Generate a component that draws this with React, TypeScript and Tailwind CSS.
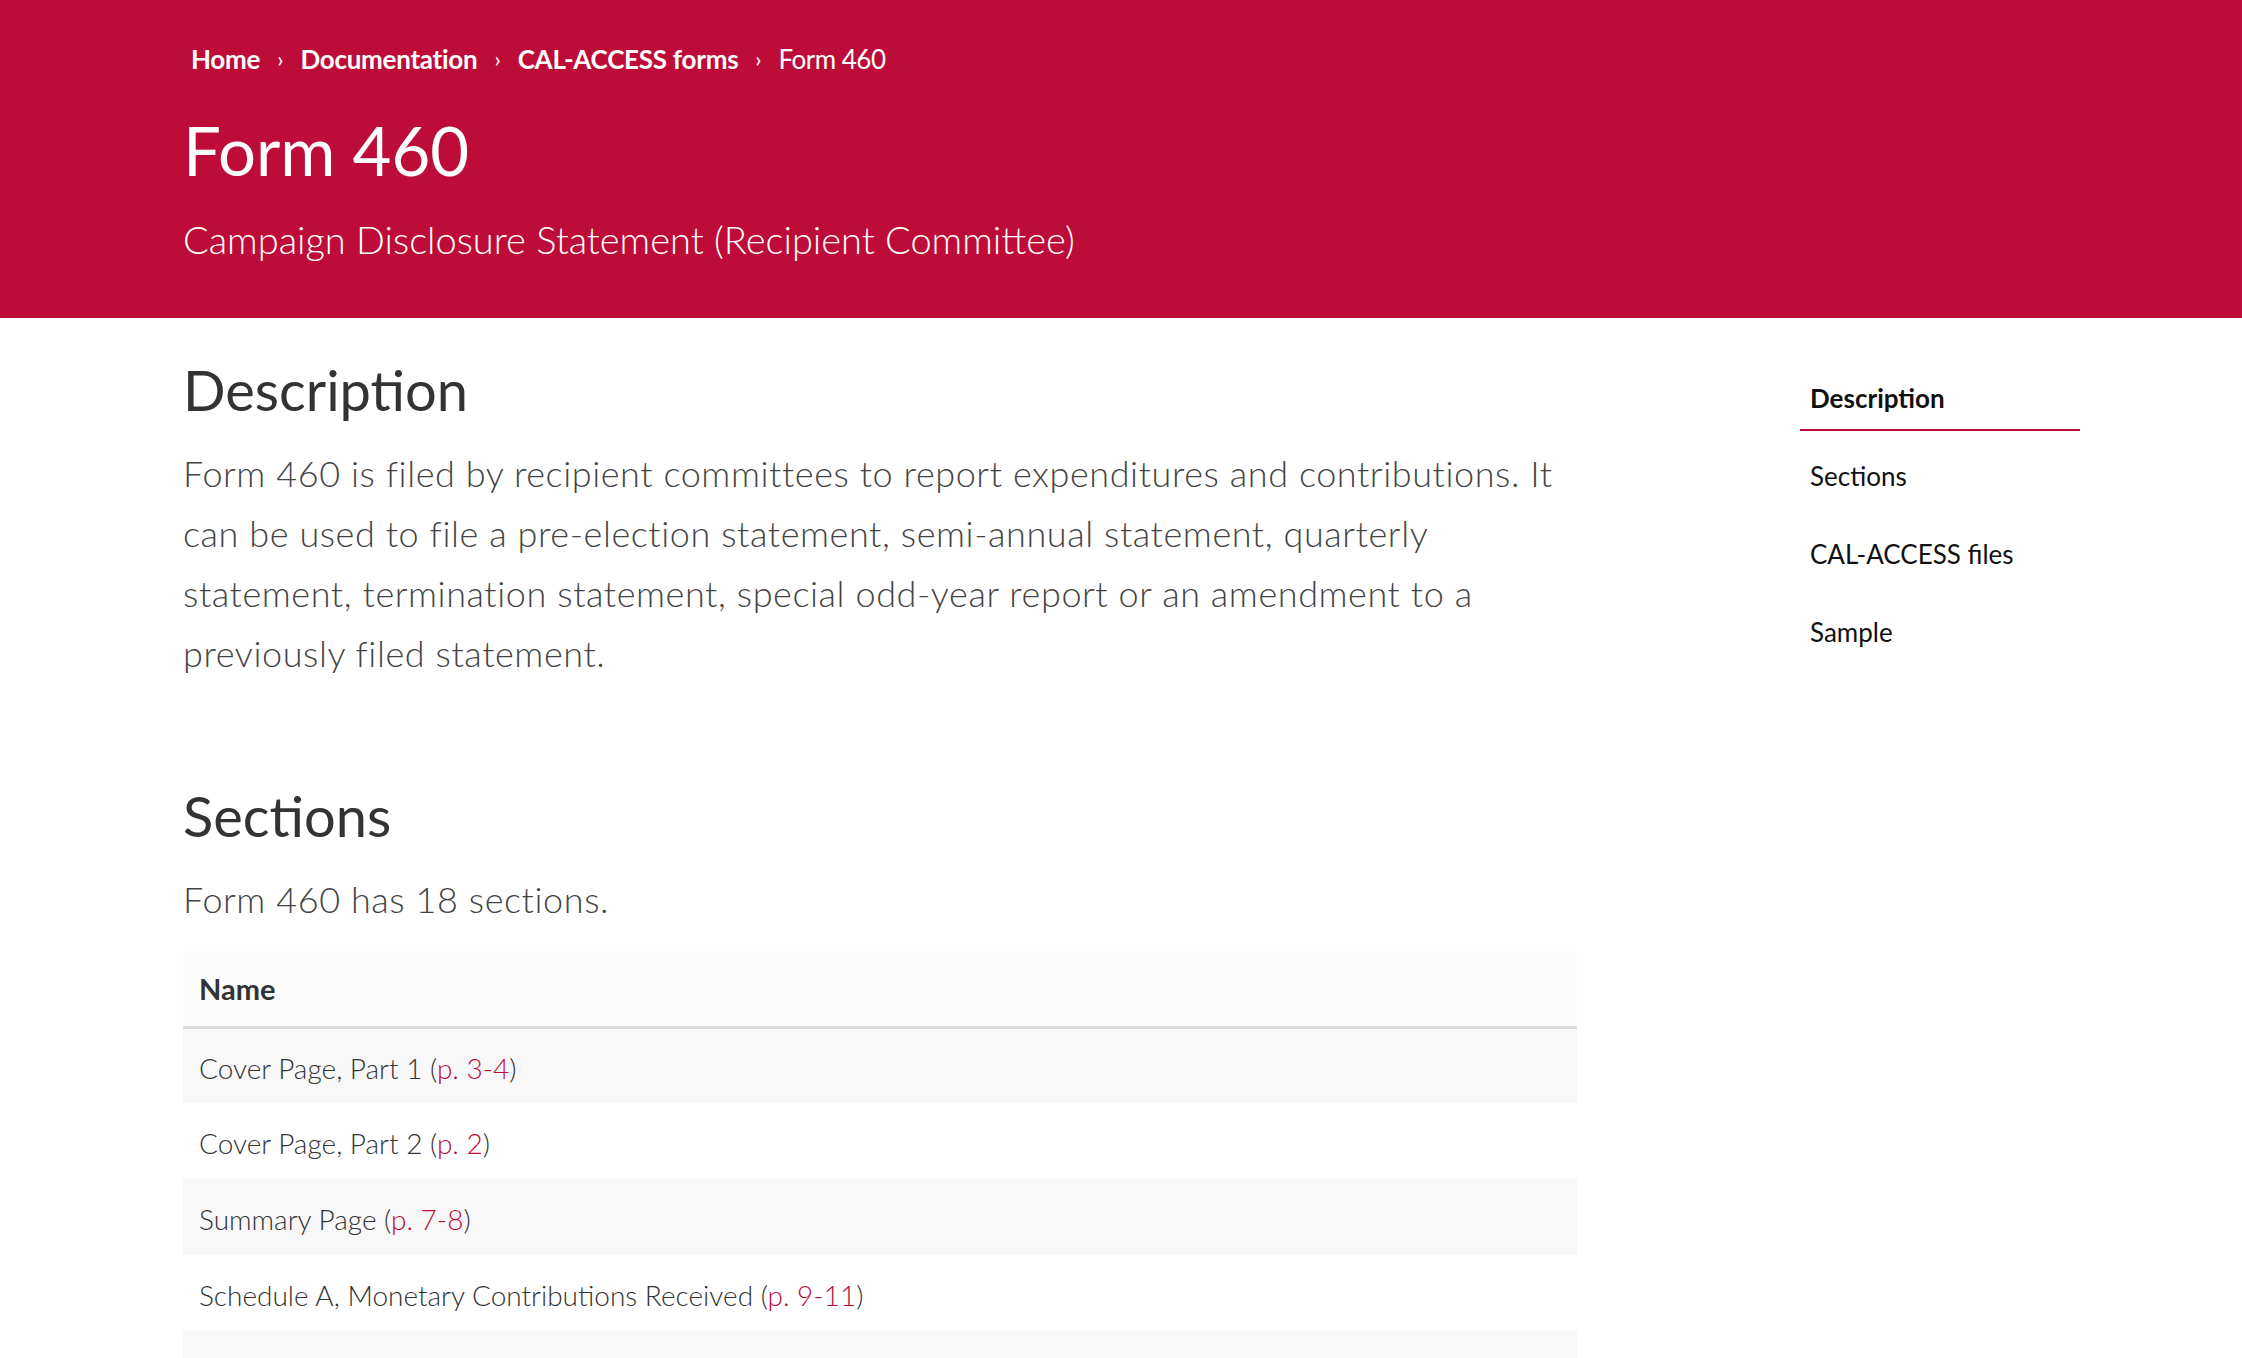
import React from "react";

const crumbs = [
  { label: "Home", link: true },
  { label: "Documentation", link: true },
  { label: "CAL-ACCESS forms", link: true },
  { label: "Form 460", link: false },
];

const sections = [
  { name: "Cover Page, Part 1", pages: "p. 3-4" },
  { name: "Cover Page, Part 2", pages: "p. 2" },
  { name: "Summary Page", pages: "p. 7-8" },
  { name: "Schedule A, Monetary Contributions Received", pages: "p. 9-11" },
  { name: "Schedule B, Part 1, Loans Received", pages: "p. 12-13" },
  { name: "Schedule B, Part 2, Loan Guarantors", pages: "p. 12-13" },
  { name: "Schedule C, Non-Monetary Contributions Received", pages: "p. 14-15" },
];

const toc = ["Description", "Sections", "CAL-ACCESS files", "Sample"];

const App = () => {
  return (
    <div className="min-h-screen bg-white font-['Lato',sans-serif] text-[#333]">
      {/* red page header */}
      <header className="bg-[#bd0c37] text-white pl-[183px] pt-[42px] pb-[55px]">
        <ol className="flex items-center pl-[8px] text-[26px] leading-[34px]">
          {crumbs.map((c, i) => (
            <li key={c.label} className="flex items-center">
              {i > 0 && (
                <span className="mx-[17px] text-[22px] font-normal">›</span>
              )}
              <span
                className={
                  c.link
                    ? "font-bold tracking-[-0.01em]"
                    : "font-normal tracking-[-0.02em]"
                }
              >
                {c.label}
              </span>
            </li>
          ))}
        </ol>
        <h1 className="mt-[34px] text-[67px] leading-[80px] font-normal">
          Form 460
        </h1>
        <p className="mt-[25px] text-[38px] leading-[48px] font-light">
          Campaign Disclosure Statement (Recipient Committee)
        </p>
      </header>

      {/* body + sidebar */}
      <div className="flex pl-[183px]">
        <main className="w-[1394px] pt-[38px]">
          <section>
            <h2 className="text-[56px] leading-[68px] font-normal text-[#333]">
              Description
            </h2>
            <p className="mt-[19px] text-[36px] leading-[60px] font-light tracking-[0.016em] text-[#444]">
              Form 460 is filed by recipient committees to report expenditures
              and contributions. It can be used to file a pre-election
              statement, semi-annual statement, quarterly statement,
              termination statement, special odd-year report or an amendment
              to a previously filed statement.
            </p>
          </section>

          <section className="mt-[99px]">
            <h2 className="text-[56px] leading-[68px] font-normal text-[#333]">
              Sections
            </h2>
            <p className="mt-[19px] text-[36px] leading-[60px] font-light tracking-[0.016em] text-[#444]">
              Form 460 has 18 sections.
            </p>
            <table className="mt-[22px] w-full border-collapse text-left">
              <thead>
                <tr className="bg-[#fcfcfc]">
                  <th className="px-[16px] h-[76px] border-b-[3px] border-[#dddddd] text-[29px] font-bold text-[#333]">
                    Name
                  </th>
                </tr>
              </thead>
              <tbody>
                {sections.map((s, i) => (
                  <tr
                    key={s.name + i}
                    className={i % 2 === 0 ? "bg-[#f8f8f8]" : "bg-white"}
                  >
                    <td className="px-[16px] pt-[4px] h-[76px] text-[28px] font-light text-[#333]">
                      {s.name} (
                      <span className="text-[#bd0c37]">{s.pages}</span>)
                    </td>
                  </tr>
                ))}
              </tbody>
            </table>
          </section>
        </main>

        {/* table of contents */}
        <nav className="ml-[223px] w-[280px] pt-[35px]">
          {toc.map((t, i) => (
            <div
              key={t}
              className={
                i === 0
                  ? "px-[10px] pt-[28px] pb-[14px] border-b-2 border-[#bd0c37] text-[26px] leading-[34px] font-bold text-[#111]"
                  : "px-[10px] pt-[28px] pb-[14px] border-b-2 border-transparent text-[26px] leading-[34px] font-normal text-[#111]"
              }
            >
              {t}
            </div>
          ))}
        </nav>
      </div>
    </div>
  );
};

export default App;
